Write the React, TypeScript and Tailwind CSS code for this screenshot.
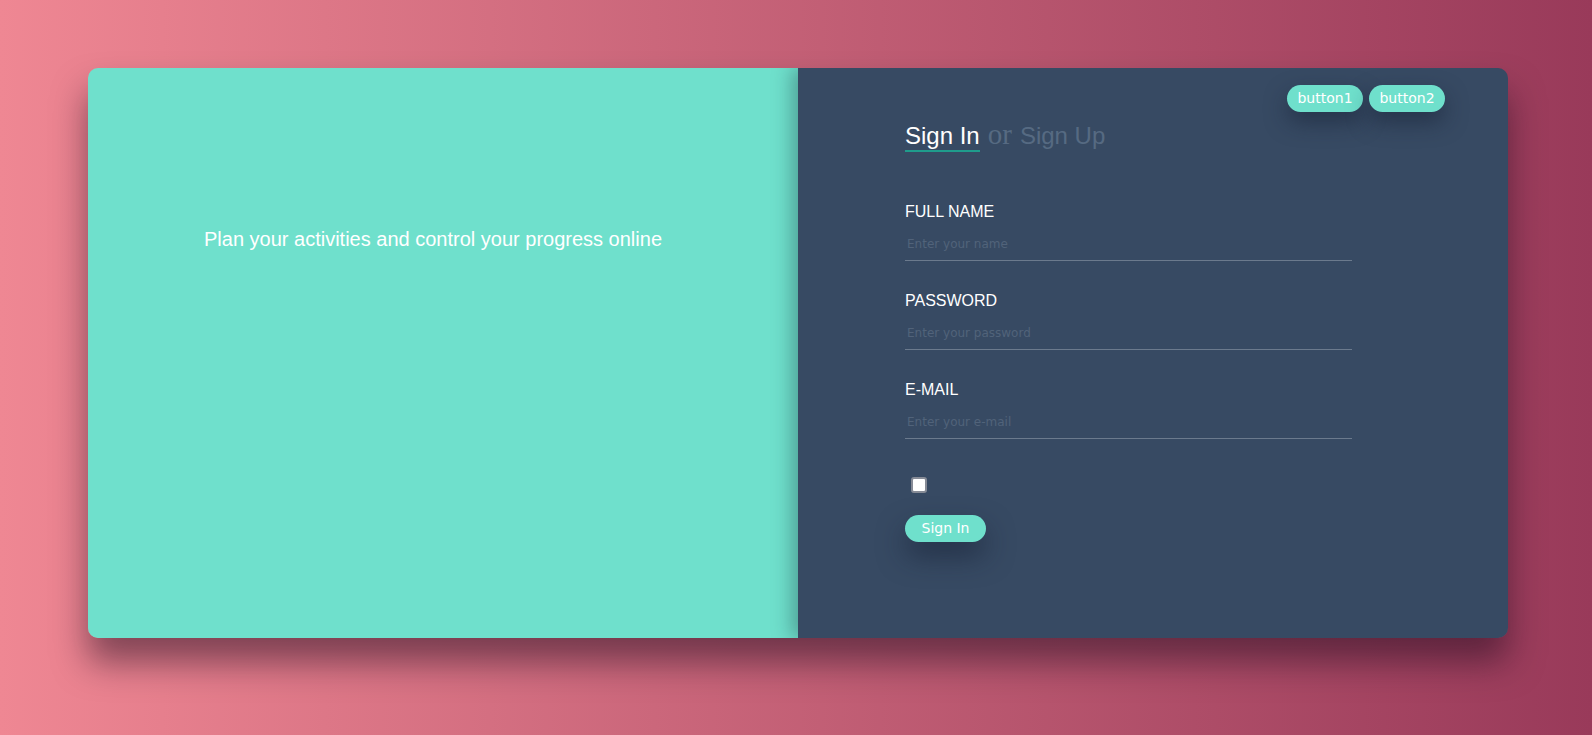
import React from "react";

const Field = ({ label, placeholder, type = "text" }: any) => (
  <div className="flex flex-col">
    <label className="text-[16px] leading-[18px] text-white font-['Liberation_Sans',Arial,sans-serif]">{label}</label>
    <input
      type={type}
      placeholder={placeholder}
      className="mt-[9px] h-[31px] w-[447px] bg-transparent border-b border-[#6b7a8d] px-[2px] pb-[2px] text-[12px] text-white outline-none placeholder:text-[#51637a] font-['DejaVu_Sans',sans-serif]"
    />
  </div>
);

export default function App() {
  return (
    <div className="min-h-[735px] w-full bg-gradient-to-r from-[#ef8793] to-[#993a5a] pt-[68px] pl-[88px]">
      <div className="flex w-[1420px] h-[570px] rounded-[10px] overflow-hidden shadow-[0_24px_34px_rgba(30,10,30,0.5)]">
        {/* left */}
        <div className="w-[710px] bg-[#6fe0cc] flex justify-center pt-[158px] pr-[20px]">
          <p className="text-[20px] leading-[26px] text-white font-['Liberation_Sans',Arial,sans-serif]">
            Plan your activities and control your progress online
          </p>
        </div>

        {/* right */}
        <div className="relative w-[710px] bg-[#374a63] shadow-[-6px_0_18px_rgba(20,40,50,0.35)] pl-[107px]">
          <div className="absolute top-[17px] right-[63px] flex gap-[6px]">
            <button className="h-[27px] w-[76px] rounded-full bg-[#6fe0cc] text-white text-[14px] font-['DejaVu_Sans',sans-serif] shadow-[0_10px_22px_rgba(20,30,50,0.5)]">button1</button>
            <button className="h-[27px] w-[76px] rounded-full bg-[#6fe0cc] text-white text-[14px] font-['DejaVu_Sans',sans-serif] shadow-[0_10px_22px_rgba(20,30,50,0.5)]">button2</button>
          </div>

          <div className="pt-[52px] flex items-baseline text-[24px] leading-[28px]">
            <span className="text-white font-['Liberation_Sans',Arial,sans-serif] border-b-2 border-[#1f9c8c]">Sign In</span>
            <span className="ml-[8px] text-[29px] text-[#566a82] font-['Liberation_Serif',serif]">or</span>
            <span className="ml-[8px] text-[#566a82] font-['Liberation_Sans',Arial,sans-serif]">Sign Up</span>
          </div>

          <div className="mt-[51px] flex flex-col gap-[31px]">
            <Field label="FULL NAME" placeholder="Enter your name" />
            <Field label="PASSWORD" placeholder="Enter your password" type="password" />
            <Field label="E-MAIL" placeholder="Enter your e-mail" />
          </div>

          <div className="mt-[38px] pl-[6px]">
            <input
              type="checkbox"
              className="appearance-none block w-[16px] h-[16px] bg-white border-2 border-[#868b96] rounded-[3px]"
            />
          </div>

          <button className="mt-[22px] h-[27px] w-[81px] rounded-full bg-[#6fe0cc] text-white text-[14px] font-['DejaVu_Sans',sans-serif] shadow-[0_14px_28px_rgba(20,30,50,0.55)]">
            Sign In
          </button>
        </div>
      </div>
    </div>
  );
}
